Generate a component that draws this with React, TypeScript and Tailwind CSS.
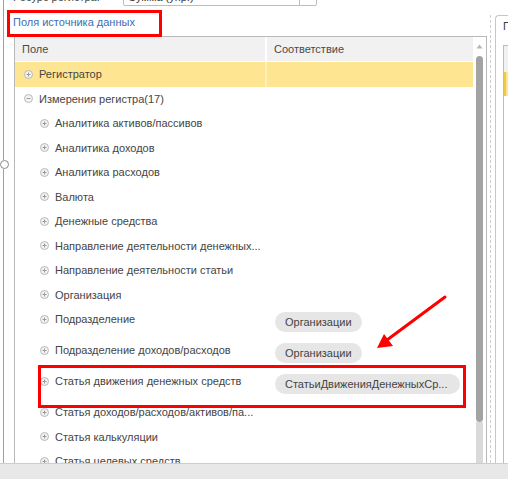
import React from "react";

const PlusIcon = ({ minus = false }: { minus?: boolean }) => (
  <svg width="9" height="9" viewBox="0 0 9 9" className="shrink-0">
    <circle cx="4.5" cy="4.5" r="4" fill="#f3f3f3" stroke="#b8b8b8" strokeWidth="1" />
    <line x1="2.5" y1="4.5" x2="6.5" y2="4.5" stroke="#9a9a9a" strokeWidth="1" />
    {!minus && <line x1="4.5" y1="2.5" x2="4.5" y2="6.5" stroke="#9a9a9a" strokeWidth="1" />}
  </svg>
);

type Row = { label: string; level: 0 | 1; minus?: boolean; pill?: string; pillWide?: boolean; selected?: boolean };

const rows: Row[] = [
  { label: "Регистратор", level: 0, selected: true },
  { label: "Измерения регистра(17)", level: 0, minus: true },
  { label: "Аналитика активов/пассивов", level: 1 },
  { label: "Аналитика доходов", level: 1 },
  { label: "Аналитика расходов", level: 1 },
  { label: "Валюта", level: 1 },
  { label: "Денежные средства", level: 1 },
  { label: "Направление деятельности денежных...", level: 1 },
  { label: "Направление деятельности статьи", level: 1 },
  { label: "Организация", level: 1 },
  { label: "Подразделение", level: 1, pill: "Организации" },
  { label: "Подразделение доходов/расходов", level: 1, pill: "Организации" },
  { label: "Статья движения денежных средств", level: 1, pill: "СтатьиДвиженияДенежныхСр...", pillWide: true },
  { label: "Статья доходов/расходов/активов/па...", level: 1 },
  { label: "Статья калькуляции", level: 1 },
  { label: "Статья целевых средств", level: 1 },
];

function TreeRow({ r }: { r: Row }) {
  const indent = r.level === 0 ? "pl-[9px]" : "pl-[25px]";
  if (r.pill) {
    return (
      <div className="flex h-[31px] shrink-0">
        <div className={`w-[252px] flex items-start pt-[5px] ${indent} gap-[6px]`}>
          <div className="h-[14px] flex items-center"><PlusIcon /></div>
          <span className="leading-[14px] whitespace-nowrap text-[#454545]">{r.label}</span>
        </div>
        <div className="flex-1 pt-[5px] pl-[8px]">
          <div
            className={`h-[20px] rounded-full bg-[#e6e6e6] pl-[10px] leading-[20px] text-[#444] whitespace-nowrap ${r.pillWide ? "w-[185px]" : "inline-block pr-[10px]"}`}
          >
            {r.pill}
          </div>
        </div>
      </div>
    );
  }
  return (
    <div className={`flex h-[24.5px] shrink-0 ${r.selected ? "bg-[#fee592]" : ""}`}>
      <div className={`w-[252px] flex items-center ${indent} gap-[6px] ${r.selected ? "border-r-2 border-[#fff0b8]" : ""}`}>
        <PlusIcon minus={r.minus} />
        <span className="leading-[14px] whitespace-nowrap text-[#454545]">{r.label}</span>
      </div>
      <div className="flex-1" />
    </div>
  );
}

export default function App() {
  return (
    <div className="relative w-[508px] h-[479px] overflow-hidden bg-white flex flex-col font-['Liberation_Sans',Arial,sans-serif] text-[11px]">
      <div className="flex flex-1 min-h-0">
        {/* left splitter */}
        <div className="w-[14px] shrink-0 flex flex-col items-start">
          <div className="ml-[3px] w-px h-[160px] bg-[#a0a0a0]" />
          <div className="w-[9px] h-[9px] rounded-full border border-[#8a8a8a] bg-white" />
          <div className="ml-[3px] w-px flex-1 bg-[#a0a0a0]" />
        </div>

        {/* center */}
        <div className="w-[473px] shrink-0 flex flex-col">
          <div className="h-[36px] shrink-0 flex flex-col">
            <div className="h-[15px] -mt-[9px] flex items-start shrink-0">
              <span className="-ml-px w-[110px] text-[#444] leading-[12px] whitespace-nowrap">Ресурс регистра:</span>
              <div className="w-[194px] h-[15px] border border-[#bdbdbd] rounded-[2px] flex">
                <span className="flex-1 pl-[4px] leading-[11px] text-[#333]">Сумма (упр.)</span>
                <div className="w-[17px] border-l border-[#bdbdbd]" />
              </div>
            </div>
            <div className="-ml-px mt-[9px] text-[#3d6db2] leading-[14px] whitespace-nowrap">Поля источника данных</div>
          </div>

          <div className="flex-1 min-h-0 flex border-l border-t border-r border-[#b9b9b9]">
            <div className="w-[458px] flex flex-col overflow-hidden">
              <div className="h-[24px] shrink-0 flex bg-[#f1f1f1] mb-px text-[#4a4a4a]">
                <div className="w-[252px] pl-[7px] flex items-center border-r-2 border-white">Поле</div>
                <div className="flex-1 pl-[7px] flex items-center">Соответствие</div>
              </div>
              {rows.map((r, i) => (
                <TreeRow key={i} r={r} />
              ))}
            </div>
            {/* scrollbar */}
            <div className="w-[13px] flex flex-col items-start">
              <div className="h-[19px] w-full flex items-center pl-[3px]">
                <svg width="7" height="5" viewBox="0 0 7 5">
                  <polygon points="3.5,0.5 6.5,4.5 0.5,4.5" fill="#b5b5b5" />
                </svg>
              </div>
              <div className="ml-[3px] w-[7px] h-[366px] rounded-full bg-[#a3a3a3]" />
              <div className="ml-[3px] w-[7px] flex-1 bg-[#dadada]" />
            </div>
          </div>
        </div>

        {/* right area */}
        <div className="flex-1 flex">
          <div className="w-[3px]" />
          <div className="w-[2px] mt-[15px] border-l border-dashed border-[#cfcfcf]" />
          <div className="w-[3px]" />
          <div className="flex-1 mt-[15px] border-l border-t border-[#c6c6c6] rounded-tl-[4px] flex flex-col">
            <div className="h-[29px] pl-[7px] pt-[3px] text-[#3a3a3a] leading-[14px] whitespace-nowrap overflow-hidden">Поля</div>
            <div className="ml-[7px] flex-1 border-l border-t border-[#bdbdbd] flex flex-col">
              <div className="h-[26px] bg-[#f1f1f1]" />
              <div className="h-[24px] bg-[#fee592] border-l-2 border-[#f0c945]" />
            </div>
          </div>
        </div>
      </div>

      {/* bottom bar */}
      <div className="h-[16px] shrink-0 bg-[#e8e8e8] border-t border-[#cdcdcd]" />

      {/* annotations */}
      <div className="absolute left-[7px] top-[10px] w-[155px] h-[27px] border-[3px] border-[#ff0000]" />
      <div className="absolute left-[38px] top-[365px] w-[428px] h-[43px] border-[3px] border-[#ff0000]" />
      <svg className="absolute left-0 top-0" width="508" height="479" viewBox="0 0 508 479">
        <line x1="445" y1="297" x2="387" y2="340" stroke="#ff0000" strokeWidth="3" strokeLinecap="round" />
        <polygon points="377,348 384,334 393,346" fill="#ff0000" />
      </svg>
    </div>
  );
}
